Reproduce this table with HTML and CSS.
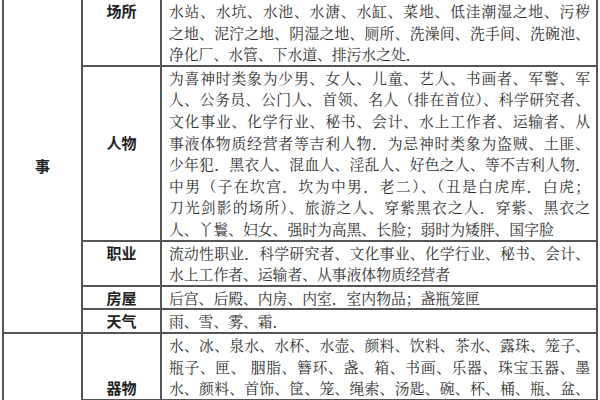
FILE: index.html
```html
<!DOCTYPE html>
<html lang="zh-CN">
<head>
<meta charset="utf-8">
<link rel="stylesheet" href="styles.css">
</head>
<body>
<div class="table">
  <div class="cat"><span>事</span></div>

  <div class="lab top"><span>场所</span></div>
  <div class="txt">
    <span class="ln">水站、水坑、水池、水溏、水缸、菜地、低洼潮湿之地、污秽</span>
    <span class="ln">之地、泥泞之地、阴湿之地、厕所、洗澡间、洗手间、洗碗池、</span>
    <span class="ln end">净化厂、水管、下水道、排污水之处．</span>
  </div>

  <div class="lab raise"><span>人物</span></div>
  <div class="txt">
    <span class="ln">为喜神时类象为少男、女人、儿童、艺人、书画者、军警、军</span>
    <span class="ln">人、公务员、公门人、首领、名人（排在首位）、科学研究者、</span>
    <span class="ln">文化事业、化学行业、秘书、会计、水上工作者、运输者、从</span>
    <span class="ln">事液体物质经营者等吉利人物．为忌神时类象为盗贼、土匪、</span>
    <span class="ln">少年犯．黑衣人、混血人、淫乱人、好色之人、等不吉利人物．</span>
    <span class="ln">中男（子在坎宫．坎为中男．老二）、（丑是白虎库．白虎；</span>
    <span class="ln">刀光剑影的场所）、旅游之人、穿紫黑衣之人．穿紫、黑衣之</span>
    <span class="ln end">人、丫鬟、妇女、强时为高黑、长脸；弱时为矮胖、国字脸</span>
  </div>

  <div class="lab top"><span>职业</span></div>
  <div class="txt">
    <span class="ln">流动性职业．科学研究者、文化事业、化学行业、秘书、会计、</span>
    <span class="ln end">水上工作者、运输者、从事液体物质经营者</span>
  </div>

  <div class="lab"><span>房屋</span></div>
  <div class="txt">
    <span class="ln end">后宫、后殿、内房、内室．室内物品；盏瓶笼匣</span>
  </div>

  <div class="lab"><span>天气</span></div>
  <div class="txt">
    <span class="ln end">雨、雪、雾、霜．</span>
  </div>

  <div class="cat"></div>
  <div class="lab bottom"><span>器物</span></div>
  <div class="txt">
    <span class="ln">水、冰、泉水、水杯、水壶、颜料、饮料、茶水、露珠、笼子、</span>
    <span class="ln">瓶子、匣、 胭脂、簪环、盏、箱、书画、乐器、珠宝玉器、墨</span>
    <span class="ln">水、颜料、首饰、筐、笼、绳索、汤匙、碗、杯、桶、瓶、盆、</span>
  </div>
</div>
</body>
</html>
```

FILE: styles.css
```css
html, body {
  margin: 0;
  padding: 0;
  background: #ffffff;
}

body {
  width: 600px;
  height: 400px;
  overflow: hidden;
}

.table {
  display: grid;
  grid-template-columns: 77px 77px 1fr;
  gap: 2px;
  padding: 2px;
  margin: -2px 0 0 2px;
  width: 592px;
  background: #555555;
  font-family: "Noto Serif CJK SC", "Noto Sans CJK SC", serif;
  font-size: 14.8px;
  line-height: 21.6px;
  color: #2e2e2e;
}

.cat {
  grid-row: span 5;
  background: #ffffff;
  display: flex;
  align-items: center;
  justify-content: center;
  font-family: "Noto Sans CJK SC", sans-serif;
  font-weight: 700;
  font-size: 15px;
  color: #222222;
}

.cat:last-of-type {
  grid-row: auto;
}

.lab {
  background: #ffffff;
  display: flex;
  align-items: center;
  justify-content: center;
  font-family: "Noto Sans CJK SC", sans-serif;
  font-weight: 700;
  font-size: 15px;
  color: #222222;
}

.lab.top {
  align-items: flex-start;
}

.lab.bottom {
  align-items: flex-end;
}

.lab.raise span {
  margin-bottom: 21.6px;
}

.txt {
  background: #ffffff;
  padding: 0 6px 0 7px;
}

.ln {
  display: block;
  text-align: justify;
  text-align-last: justify;
  white-space: nowrap;
}

.ln.end {
  text-align-last: left;
}
```
